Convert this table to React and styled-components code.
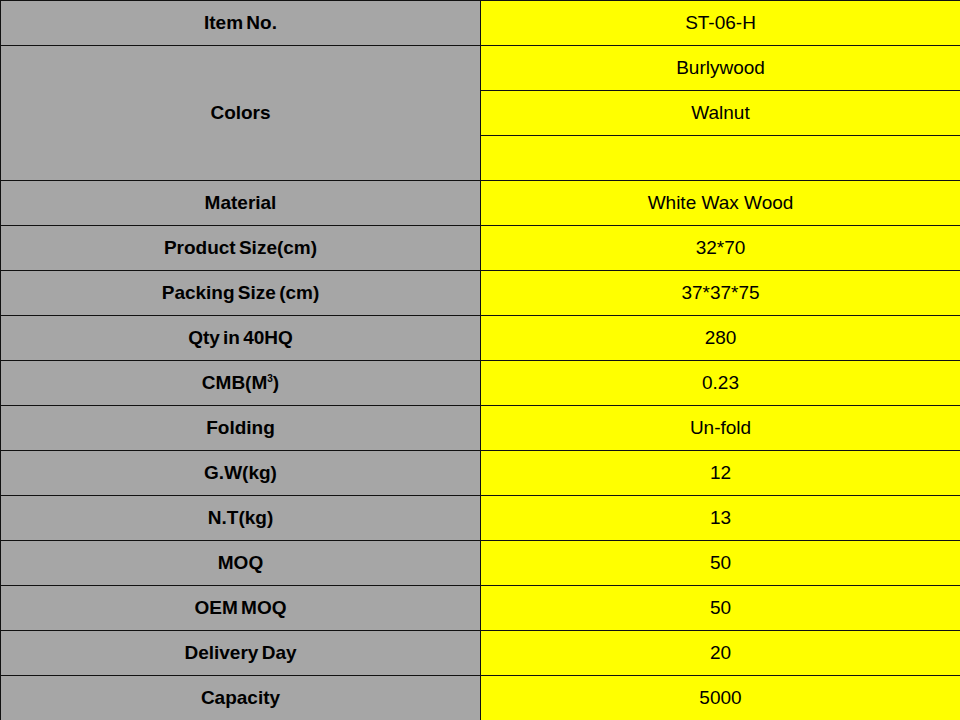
import styled, { createGlobalStyle } from "styled-components"

const GlobalStyle = createGlobalStyle`
  html, body {
    margin: 0;
    padding: 0;
    background: #ffffff;
  }
`

const rows = [
    ["Item No.", ["ST-06-H"]],
    ["Colors", ["Burlywood", "Walnut", ""]],
    ["Material", ["White Wax Wood"]],
    ["Product Size(cm)", ["32*70"]],
    ["Packing Size (cm)", ["37*37*75"]],
    ["Qty in 40HQ", ["280"]],
    ["CMB", ["0.23"], true],
    ["Folding", ["Un-fold"]],
    ["G.W(kg)", ["12"]],
    ["N.T(kg)", ["13"]],
    ["MOQ", ["50"]],
    ["OEM MOQ", ["50"]],
    ["Delivery Day", ["20"]],
    ["Capacity", ["5000"]],
]

const App = () => {
    return (
        <>
            <GlobalStyle />
            <Sheet>
                {rows.map(([label, values, cubic]) => [
                    <Label key={label} $span={values.length}>
                        {cubic ? (
                            <span>
                                CMB(M<sup>3</sup>)
                            </span>
                        ) : (
                            label
                        )}
                    </Label>,
                    ...values.map((v, i) => <Value key={label + i}>{v}</Value>),
                ])}
            </Sheet>
        </>
    )
}

const Sheet = styled.div`
    display: grid;
    grid-template-columns: 480px 480px;
    grid-auto-rows: 45px;
    width: 960px;
    height: 720px;
    overflow: hidden;
    font-family: "Liberation Sans", Arial, sans-serif;
    color: #000;
`

const Cell = styled.div`
    box-sizing: border-box;
    display: flex;
    align-items: center;
    justify-content: center;
    border-top: 1px solid #111;
    border-left: 1px solid #111;
    font-size: 19px;
    white-space: nowrap;
`

const Label = styled(Cell)`
    grid-row: span ${(p) => p.$span};
    background: #a6a6a6;
    font-weight: bold;
    word-spacing: -2px;

    sup {
        font-size: 10px;
        vertical-align: 7px;
        line-height: 0;
    }
`

const Value = styled(Cell)`
    background: #ffff00;
`

export default App
